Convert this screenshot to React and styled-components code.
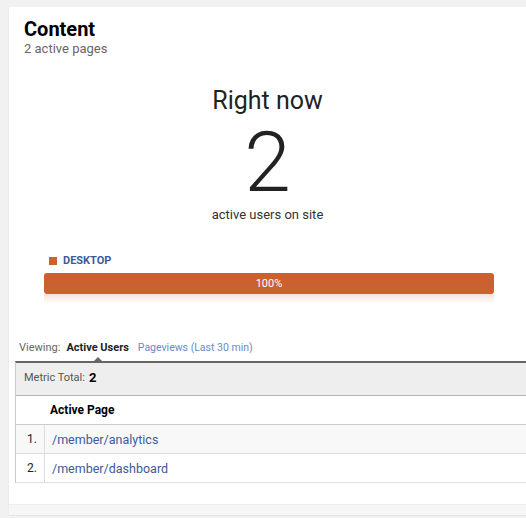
import React from 'react';
import styled, { createGlobalStyle } from 'styled-components';

const GlobalStyle = createGlobalStyle`
  html, body {
    margin: 0;
    padding: 0;
    background: #f1f1f1;
    font-family: Roboto, "Liberation Sans", Arial, sans-serif;
    overflow: hidden;
  }
`;

const Page = styled.div`
  padding: 7px 0 0 9px;
  width: 526px;
  box-sizing: border-box;
`;

const Card = styled.div`
  background: #fff;
  box-shadow: 0 1px 2px rgba(0, 0, 0, 0.08);
`;

const Header = styled.div`
  padding: 10px 15px 0;
`;

const Title = styled.h2`
  margin: 0;
  font-size: 20px;
  font-weight: 700;
  color: #000;
  line-height: 24px;
`;

const Subtitle = styled.div`
  font-size: 13px;
  color: #666;
  line-height: 16px;
`;

const Now = styled.div`
  display: flex;
  flex-direction: column;
  align-items: center;
  padding-top: 29px;
`;

const NowLabel = styled.div`
  font-size: 25px;
  color: #222;
  line-height: 30px;
`;

const BigNumber = styled.div`
  font-size: 84px;
  font-weight: 300;
  color: #222;
  line-height: 78px;
  margin-top: 8px;
`;

const NowCaption = styled.div`
  font-size: 13px;
  color: #333;
  line-height: 16px;
  margin-top: 5px;
`;

const Devices = styled.div`
  padding: 31px 32px 0 35px;
`;

const Legend = styled.div`
  display: flex;
  align-items: center;
  gap: 6px;
  padding-left: 5px;
  font-size: 11px;
  font-weight: 700;
  color: #3d5a99;
  line-height: 14px;
`;

const Swatch = styled.span`
  width: 8px;
  height: 8px;
  background: ${p => p.color};
`;

const Bar = styled.div`
  display: flex;
  margin-top: 5px;
  height: 21px;
  border-radius: 3px;
  overflow: hidden;
`;

const Segment = styled.div`
  background: ${p => p.color};
  color: #fff;
  font-size: 11px;
  display: flex;
  align-items: center;
  justify-content: center;
`;

const Reflection = styled.div`
  height: 10px;
  background: linear-gradient(to bottom, rgba(203, 97, 48, 0.18), rgba(203, 97, 48, 0));
`;

const Tabs = styled.div`
  display: flex;
  align-items: center;
  gap: 6px;
  padding: 36px 0 0 10px;
  font-size: 11px;
  line-height: 16px;
  color: #666;
`;

const Tab = styled.span`
  position: relative;
  color: ${p => (p.active ? '#222' : '#6b8bc3')};
  font-weight: ${p => (p.active ? 700 : 400)};
  font-size: ${p => (p.active ? '11px' : '10.5px')};
  margin-right: ${p => (p.active ? '3px' : '0')};
  ${p =>
    p.active &&
    `
    &::after {
      content: '';
      position: absolute;
      left: 50%;
      bottom: -7px;
      margin-left: -6px;
      border-left: 6px solid transparent;
      border-right: 6px solid transparent;
      border-bottom: 6px solid #666;
    }
  `}
`;

const Table = styled.div`
  margin: 5px 0 0 6px;
  border-top: 2px solid #666;
  border-left: 1px solid #ccc;
`;

const TotalRow = styled.div`
  background: #eee;
  height: 33px;
  box-sizing: border-box;
  padding: 0 0 4px 8px;
  display: flex;
  align-items: center;
  font-size: 11px;
  color: #555;
  border-bottom: 1px solid #b5b5b5;
  gap: 4px;
  b {
    font-size: 13px;
    color: #000;
  }
`;

const Row = styled.div`
  display: grid;
  grid-template-columns: 29px 1fr;
  height: 28px;
  background: ${p => p.bg || '#fff'};
  border-bottom: 1px solid ${p => p.line || '#ddd'};
`;

const Cell = styled.div`
  display: flex;
  align-items: center;
  font-size: ${p => p.size || '12px'};
  color: ${p => p.color || '#222'};
  font-weight: ${p => (p.bold ? 700 : 400)};
  padding-left: ${p => p.pad || '6px'};
  justify-content: ${p => (p.right ? 'flex-end' : 'flex-start')};
  padding-right: ${p => (p.right ? '7px' : '0')};
  border-right: ${p => (p.divider ? '1px solid #ddd' : 'none')};
`;

const Spacer = styled.div`
  height: 21px;
`;

const Footer = styled.div`
  height: 10px;
  background: #f6f6f6;
  border-top: 1px solid #eee;
  border-bottom: 1px solid #e4e4e4;
`;

const pages = ['/member/analytics', '/member/dashboard'];

export default function App() {
  return (
    <>
      <GlobalStyle />
      <Page>
        <Card>
          <Header>
            <Title>Content</Title>
            <Subtitle>2 active pages</Subtitle>
          </Header>
          <Now>
            <NowLabel>Right now</NowLabel>
            <BigNumber>2</BigNumber>
            <NowCaption>active users on site</NowCaption>
          </Now>
          <Devices>
            <Legend>
              <Swatch color="#cb6130" />
              DESKTOP
            </Legend>
            <Bar>
              <Segment color="#cb6130" style={{ width: '100%' }}>100%</Segment>
            </Bar>
            <Reflection />
          </Devices>
          <Tabs>
            <span>Viewing:</span>
            <Tab active>Active Users</Tab>
            <Tab>Pageviews (Last 30 min)</Tab>
          </Tabs>
          <Table>
            <TotalRow>
              Metric Total: <b>2</b>
            </TotalRow>
            <Row line="#ccc">
              <Cell />
              <Cell bold color="#000" pad="5px">Active Page</Cell>
            </Row>
            {pages.map((p, i) => (
              <Row key={p} bg={i % 2 === 0 ? '#f8f8f8' : '#fff'}>
                <Cell right divider>{i + 1}.</Cell>
                <Cell color="#3d5a99" pad="7px" size="12.5px">{p}</Cell>
              </Row>
            ))}
          </Table>
          <Spacer />
          <Footer />
        </Card>
      </Page>
    </>
  );
}
